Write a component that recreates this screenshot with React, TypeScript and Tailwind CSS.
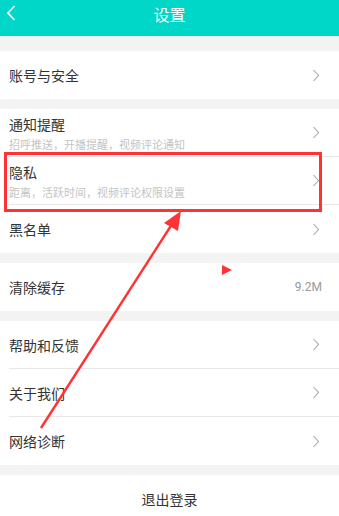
interface Row {
  title: string
  sub?: string
  value?: string
}

const groups: Row[][] = [
  [{ title: "账号与安全" }],
  [
    { title: "通知提醒", sub: "招呼推送，开播提醒，视频评论通知" },
    { title: "隐私", sub: "距离，活跃时间，视频评论权限设置" },
    { title: "黑名单" },
  ],
  [{ title: "清除缓存", value: "9.2M" }],
  [{ title: "帮助和反馈" }, { title: "关于我们" }, { title: "网络诊断" }],
]

// 右侧箭头
function Arrow() {
  return (
    <svg width="8" height="13" viewBox="0 0 8 13" className="mr-[1px]">
      <path d="M1.5 1 L6.5 6.5 L1.5 12" fill="none" stroke="#a8a8a8" strokeWidth="1.1" />
    </svg>
  )
}

function SettingRow({ row, last }: { row: Row; last: boolean }) {
  return (
    <div className="pl-[9px] bg-white">
      <div
        className={`h-12 flex items-center pr-[18px] ${last ? "" : "border-b border-[#e8e8e8]"}`}
      >
        <div className="flex-1 min-w-0">
          <div className="text-[14px] leading-[18px] text-[#333]">{row.title}</div>
          {row.sub && (
            <div className="text-[11px] leading-[14px] mt-[4px] text-[#c4c4c4]">{row.sub}</div>
          )}
        </div>
        {row.value ? (
          <span className="text-[12px] text-[#999] -mr-[1px]" style={{ fontFamily: "Roboto, sans-serif" }}>
            {row.value}
          </span>
        ) : (
          <Arrow />
        )}
      </div>
    </div>
  )
}

export default function App() {
  return (
    <div
      className="relative w-[339px] h-[516px] overflow-hidden bg-[#f3f3f3]"
      style={{ fontFamily: '"Noto Sans CJK SC", "Noto Sans", sans-serif' }}
    >
      {/* 顶部导航 */}
      <div className="h-9 bg-[#01d7c8] relative flex items-center justify-center pb-[8px]">
        <svg width="10" height="16" viewBox="0 0 10 16" className="absolute left-[6px] top-[5px]">
          <path d="M8.5 1 L2 8 L8.5 15" fill="none" stroke="#fff" strokeWidth="1.7" />
        </svg>
        <span className="text-white text-[16px]">设置</span>
      </div>

      <div className="flex flex-col gap-[10px] pt-[15px]">
        {groups.map((g, gi) => (
          <div key={gi} className="bg-white">
            {g.map((row, ri) => (
              <SettingRow key={row.title} row={row} last={ri === g.length - 1} />
            ))}
          </div>
        ))}
        <div className="h-12 bg-white flex items-center justify-center text-[14px] text-[#333]">
          退出登录
        </div>
      </div>

      {/* 标注 */}
      <div className="absolute left-[4px] top-[152px] w-[318px] h-[60px] border-[3px] border-[#ff3333]" />
      <svg className="absolute inset-0" width="339" height="516" viewBox="0 0 339 516">
        <line x1="41" y1="428" x2="174" y2="221" stroke="#ff3333" strokeWidth="2.4" />
        <polygon points="181,211 164,223 178,231" fill="#ff3333" />
        <polygon points="222,265 232,270 222,275" fill="#ff3333" />
      </svg>
    </div>
  )
}
